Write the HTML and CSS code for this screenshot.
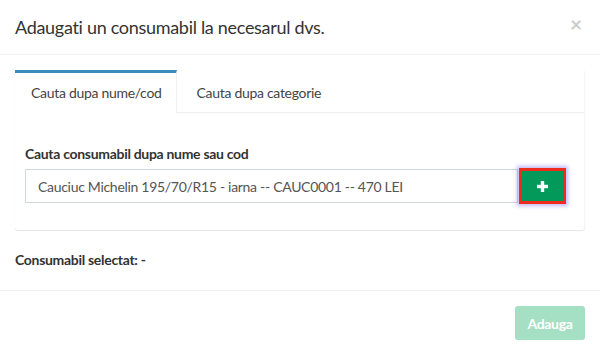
FILE: index.html
```html
<!DOCTYPE html>
<html lang="ro">
<head>
<meta charset="UTF-8">
<meta name="viewport" content="width=device-width, initial-scale=1.0">
<title>Adaugati un consumabil</title>
<link rel="stylesheet" href="styles.css">
</head>
<body>

<div class="modal-content">
  <div class="modal-header">
    <h4 class="modal-title">Adaugati un consumabil la necesarul dvs.</h4>
    <span class="close">&times;</span>
  </div>

  <div class="modal-body">
    <div class="nav-tabs-custom">
      <ul class="nav-tabs">
        <li class="active"><a href="#byName">Cauta dupa nume/cod</a></li>
        <li><a href="#byCategory">Cauta dupa categorie</a></li>
      </ul>
      <div class="tab-content">
        <div class="form-group">
          <label for="searchInput">Cauta consumabil dupa nume sau cod</label>
          <div class="input-group">
            <input type="text" id="searchInput" class="form-control" value="Cauciuc Michelin 195/70/R15 - iarna -- CAUC0001 -- 470 LEI">
            <button type="button" class="btn-add">
              <svg width="11" height="11" viewBox="0 0 11 11"><rect x="3.8" y="0" width="3.4" height="11" fill="#fff"/><rect x="0" y="3.8" width="11" height="3.4" fill="#fff"/></svg>
            </button>
          </div>
        </div>
      </div>
    </div>

    <p class="selected">Consumabil selectat: -</p>
  </div>

  <div class="modal-footer">
    <button type="button" class="btn-success" disabled>Adauga</button>
  </div>
</div>

</body>
</html>
```

FILE: styles.css
```css
body {
  margin: 0;
  font-family: Lato, "Noto Sans", sans-serif;
  font-size: 14px;
  letter-spacing: -0.3px;
  color: #333;
  background-color: #fff;
}
.modal-content {
  width: 600px;
}
.modal-header {
  display: flex;
  justify-content: space-between;
  align-items: center;
  height: 55px;
  padding: 0 15px;
  border-bottom: 1px solid #f0f0f0;
  box-sizing: border-box;
}
.modal-title {
  margin: 0;
  font-size: 18px;
  font-weight: normal;
  color: #333;
}
.close {
  font-size: 21px;
  font-weight: bold;
  color: #000;
  opacity: 0.2;
  line-height: 1;
  margin-top: -8px;
  margin-right: 3px;
}
.modal-body {
  padding: 15px;
}
.nav-tabs-custom {
  background-color: #fff;
  border-radius: 3px;
  box-shadow: 0 1px 1px rgba(0, 0, 0, 0.1);
  margin-bottom: 20px;
  border-right: 1px solid #f4f4f4;
}
.nav-tabs {
  display: flex;
  list-style: none;
  margin: 0;
  padding: 0;
  border-bottom: 1px solid #f0f0f0;
}
.nav-tabs li {
  border-top: 3px solid transparent;
  margin-bottom: -1px;
  margin-right: 5px;
}
.nav-tabs li.active {
  border-top-color: #3c8dbc;
  background-color: #fff;
  border-right: 1px solid #f0f0f0;
}
.nav-tabs a {
  display: block;
  padding: 11px 15px 0;
  height: 29px;
  color: #444;
  text-decoration: none;
}
.nav-tabs li.active a {
  padding: 11px 14px 0 16px;
}
.tab-content {
  padding: 32px 10px 26px;
}
.form-group label {
  display: block;
  font-weight: bold;
  margin-bottom: 6px;
}
.input-group {
  display: flex;
  align-items: center;
  margin-right: 8px;
}
.form-control {
  flex: 1;
  height: 34px;
  padding: 6px 12px;
  box-sizing: border-box;
  border: 1px solid #d2d6de;
  font-family: inherit;
  font-size: 14px;
  letter-spacing: -0.3px;
  color: #555;
  outline: none;
}
.btn-add {
  width: 47px;
  height: 36px;
  margin-left: 1px;
  display: flex;
  align-items: center;
  justify-content: center;
  background-color: #03995a;
  border: 3px solid #f02a1c;
  box-shadow: 0 0 4px 2px rgba(120, 100, 230, 0.45);
  cursor: pointer;
  padding: 0;
}
.selected {
  margin: 0;
  height: 25px;
  line-height: 20px;
  font-weight: bold;
}
.modal-footer {
  display: flex;
  justify-content: flex-end;
  padding: 15px;
  border-top: 1px solid #f0f0f0;
}
.btn-success {
  width: 70px;
  height: 34px;
  border: none;
  border-radius: 3px;
  background-color: #a5dfc4;
  color: #fff;
  font-family: inherit;
  font-size: 14px;
  font-weight: bold;
  letter-spacing: -0.3px;
}
```
